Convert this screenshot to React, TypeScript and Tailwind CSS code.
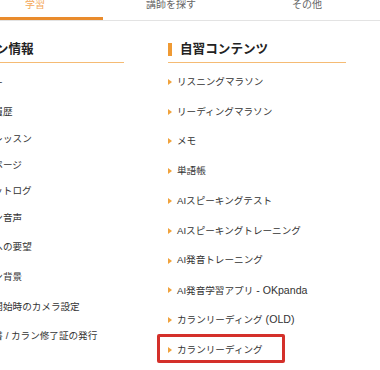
const tabs = [
  { label: "学習", active: true },
  { label: "講師を探す", active: false },
  { label: "その他", active: false },
];

const lessonItems = [
  { label: "カレンダー", h: "h-[30px]" },
  { label: "レッスン履歴", h: "h-[28px]" },
  { label: "予約中のレッスン", h: "h-[26px]" },
  { label: "会員専用ページ", h: "h-[26px]" },
  { label: "学習チャットログ", h: "h-[26px]" },
  { label: "セッション音声", h: "h-[28px]" },
  { label: "スタッフへの要望", h: "h-[30px]" },
  { label: "オンライン背景", h: "h-[30px]" },
  { label: "レッスン開始時のカメラ設定", h: "h-[29.5px]" },
  { label: "受講証明書 / カラン修了証の発行", h: "h-[29.5px]" },
];

// suffix = latin tail, set a touch larger like the original's font
const studyItems = [
  { label: "リスニングマラソン" },
  { label: "リーディングマラソン" },
  { label: "メモ" },
  { label: "単語帳" },
  { label: "AIスピーキングテスト" },
  { label: "AIスピーキングトレーニング" },
  { label: "AI発音トレーニング" },
  { label: "AI発音学習アプリ", suffix: " - OKpanda" },
  { label: "カランリーディング", suffix: " (OLD)" },
  { label: "カランリーディング" },
];

function Arrow() {
  return (
    <span className="w-0 h-0 border-y-[3px] border-y-transparent border-l-[4px] border-l-[#f0a23c] shrink-0" />
  );
}

function Heading({ title }: { title: string }) {
  return (
    <div className="pt-[18px] pb-[3px] border-b border-[#f5bb74]">
      <div className="flex items-center h-[20px] gap-[8px]">
        <span className="w-[4px] h-[13px] bg-[#ef9a34]" />
        <h2 className="text-[12.6px] font-bold text-[#222] leading-none whitespace-nowrap">
          {title}
        </h2>
      </div>
    </div>
  );
}

export default function App() {
  return (
    <div
      className="w-[380px] h-[370px] overflow-hidden bg-white"
      style={{ fontFamily: '"Liberation Sans", "Noto Sans CJK JP", sans-serif' }}
    >
      {/* Tabs */}
      <nav className="flex h-[21px] w-[446px] -ml-[33px] border-b border-[#e3e3e3]">
        {tabs.map((tab) => (
          <div
            key={tab.label}
            className={`w-[136px] h-[20px] flex justify-center ${
              tab.active ? "border-b-[3px] border-[#e98b2c]" : ""
            }`}
          >
            <span
              className={`mt-0 text-[10px] leading-[10px] ${
                tab.active ? "text-[#f4a85a]" : "text-[#666]"
              }`}
            >
              {tab.label}
            </span>
          </div>
        ))}
      </nav>

      <div className="flex gap-[44px] -ml-[54px]">
        {/* Lesson info column */}
        <section className="w-[178px] shrink-0">
          <Heading title="レッスン情報" />
          <ul className="mt-[5px]">
            {lessonItems.map((item) => (
              <li key={item.label} className={`${item.h} flex items-center gap-[5px]`}>
                <Arrow />
                <span className="text-[9.6px] text-[#333] whitespace-nowrap">
                  {item.label}
                </span>
              </li>
            ))}
          </ul>
        </section>

        {/* Self-study column */}
        <section className="w-[178px] shrink-0">
          <Heading title="自習コンテンツ" />
          <ul className="mt-[4px]">
            {studyItems.map((item, i) => (
              <li key={i} className="relative h-[29.8px] flex items-center gap-[5px]">
                <Arrow />
                <span className="text-[9.6px] text-[#333] whitespace-nowrap">
                  {item.label}
                  {item.suffix && <span className="text-[10.6px]">{item.suffix}</span>}
                </span>
                {i === studyItems.length - 1 && (
                  <span className="absolute -left-[11px] -top-[1px] w-[128px] h-[29px] border-[3px] border-[#d4302a] rounded-[2px]" />
                )}
              </li>
            ))}
          </ul>
        </section>
      </div>
    </div>
  );
}
